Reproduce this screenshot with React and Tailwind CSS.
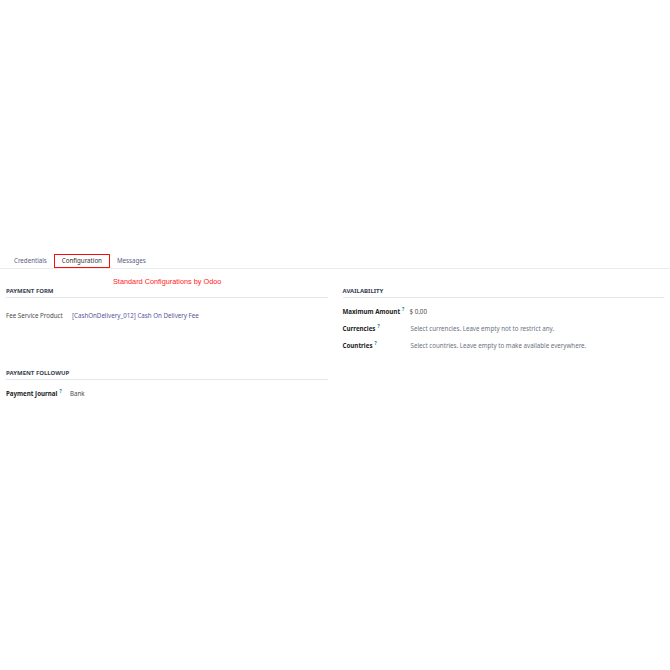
import React from 'react';

const font = { fontFamily: '"Noto Sans", "Open Sans", sans-serif' };

function Help() {
  return <sup className="relative top-[-3px] ml-[2px] text-[4.5px] text-[#017e84]">?</sup>;
}

function SectionTitle({ children }) {
  return (
    <div className="border-b border-[#e5e7eb] pb-[1px] text-[6px] font-bold uppercase text-[#374151]">
      {children}
    </div>
  );
}

export default function App() {
  return (
    <div className="min-h-[670px] w-[670px] bg-white pt-[253px] text-[6.2px] leading-[9px] text-[#4b4b4b]" style={font}>
      {/* Tabs */}
      <div className="flex items-end border-b border-[#e9ecef] pl-[6px]">
        <div className="px-[8px] pt-[3px] pb-[3px] text-[#5b5a86]">Credentials</div>
        <div className="ml-[-1px] border-[1.5px] border-[#ff0a0a] px-[7px] pt-[1.5px] pb-[2px] text-[#333]">Configuration</div>
        <div className="px-[7px] pt-[3px] pb-[3px] text-[#5b5a86]">Messages</div>
      </div>

      <div className="pl-[113px] pt-[9px] text-[7.3px] leading-none text-[#ff1a1a]" style={{ fontFamily: '"Liberation Sans", Arial, sans-serif' }}>
        Standard Configurations by Odoo
      </div>

      <div className="grid grid-cols-2 gap-x-[15px] pl-[6px] pr-[6px] pt-[2px]">
        {/* Left column */}
        <div>
          <SectionTitle>Payment Form</SectionTitle>
          <div className="mt-[13px] flex items-center">
            <div className="w-[66px] text-[#4b4b4b]">Fee Service Product</div>
            <div className="text-[#56559a]">[CashOnDelivery_012] Cash On Delivery Fee</div>
          </div>

          <div className="mt-[49px]">
            <SectionTitle>Payment Followup</SectionTitle>
          </div>
          <div className="mt-[9px] flex items-center">
            <div className="w-[64px] font-bold text-[#222]">
              Payment Journal<Help />
            </div>
            <div>Bank</div>
          </div>
        </div>

        {/* Right column */}
        <div>
          <SectionTitle>Availability</SectionTitle>
          <div className="mt-[9px] flex flex-col gap-[8px]">
            <div className="flex items-center">
              <div className="w-[67px] font-bold text-[#222]">
                Maximum Amount<Help />
              </div>
              <div>$ 0.00</div>
            </div>
            <div className="flex items-center">
              <div className="w-[68px] font-bold text-[#222]">
                Currencies<Help />
              </div>
              <div className="text-[#6b7280]">Select currencies. Leave empty not to restrict any.</div>
            </div>
            <div className="flex items-center">
              <div className="w-[68px] font-bold text-[#222]">
                Countries<Help />
              </div>
              <div className="text-[#6b7280]">Select countries. Leave empty to make available everywhere.</div>
            </div>
          </div>
        </div>
      </div>
    </div>
  );
}
